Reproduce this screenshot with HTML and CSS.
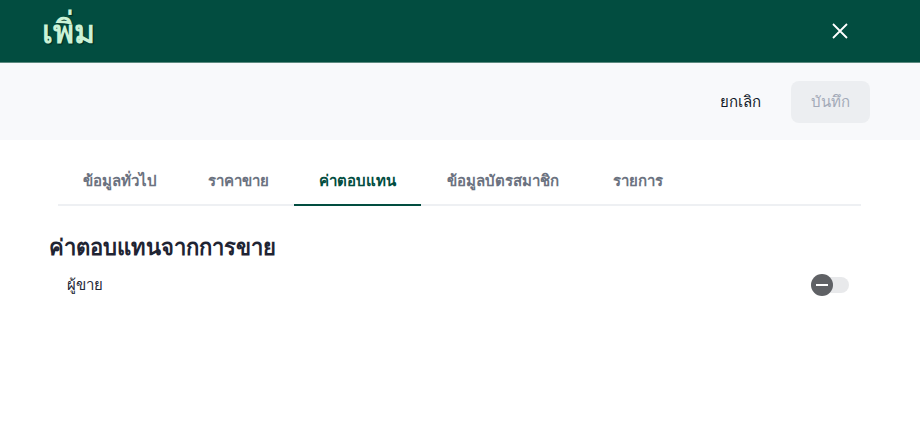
FILE: index.html
```html
<!DOCTYPE html>
<html lang="th">
<head>
<meta charset="utf-8">
<link rel="stylesheet" href="styles.css">
</head>
<body>
<div class="dialog">
  <header class="topbar">
    <h1 class="title">เพิ่ม</h1>
    <button class="close" aria-label="close">
      <svg width="16" height="16" viewBox="0 0 16 16"><path d="M1 1 L15 15 M15 1 L1 15" stroke="#fff" stroke-width="1.8" fill="none"/></svg>
    </button>
  </header>
  <div class="actions">
    <button class="btn-cancel">ยกเลิก</button>
    <button class="btn-save">บันทึก</button>
  </div>
  <div class="content">
    <nav class="tabs">
      <div class="tab">ข้อมูลทั่วไป</div>
      <div class="tab">ราคาขาย</div>
      <div class="tab active">ค่าตอบแทน</div>
      <div class="tab wide">ข้อมูลบัตรสมาชิก</div>
      <div class="tab">รายการ</div>
    </nav>
    <h2 class="section">ค่าตอบแทนจากการขาย</h2>
    <div class="row">
      <span class="label">ผู้ขาย</span>
      <span class="toggle"><span class="knob"></span></span>
    </div>
  </div>
</div>
</body>
</html>
```
FILE: styles.css
```css
* { box-sizing: border-box; }
html, body { margin: 0; padding: 0; background: #fff; }
body { font-family: "Noto Sans", "Liberation Sans", sans-serif; color: #1f2937; }
.topbar {
  height: 63px;
  background: #024d40;
  border-bottom: 1px solid #5c8a80;
  display: flex;
  align-items: center;
  justify-content: space-between;
  padding: 0 72px 0 42px;
}
.title {
  margin: 0;
  font-size: 32px;
  font-weight: 700;
  color: #c9f2d6;
  text-shadow: 1px 1px 1px rgba(0,0,0,0.5);
  line-height: 1;
}
.close {
  background: none; border: 0; padding: 0; width: 16px; height: 16px;
  display: flex;
}
.actions {
  height: 77px;
  background: #f8f9fb;
  display: flex;
  align-items: center;
  justify-content: flex-end;
  padding: 0 50px 0 0;
  gap: 30px;
}
.btn-cancel {
  background: none; border: 0; font-family: inherit;
  font-size: 15px; color: #111827; padding: 0;
}
.btn-save {
  width: 79px; height: 42px; border: 0; border-radius: 8px;
  background: #eceef1; color: #a3aab8; font-family: inherit; font-size: 15px;
}
.content { padding: 18px 59px 0 49px; }
.tabs {
  display: flex;
  margin-left: 9px;
  border-bottom: 2px solid #eef0f3;
  height: 48px;
}
.tab {
  padding: 0 25px 0 25px;
  font-size: 15px;
  font-weight: 600;
  color: #6b7280;
  display: flex; align-items: center;
  margin-bottom: -2px;
  border-bottom: 2px solid transparent;
}
.tab:first-child { padding-right: 26px; }
.tab.active { color: #024d40; border-bottom-color: #024d40; }
.tab.wide { padding-left: 26px; padding-right: 29px; }
.section {
  margin: 24px 0 0 0;
  font-size: 22px;
  font-weight: 700;
  color: #1f2433;
}
.row {
  display: flex; align-items: center; justify-content: space-between;
  padding: 8px 0 0 18px;
}
.label { font-size: 15px; color: #1f2937; }
.toggle {
  width: 37px; height: 16px; border-radius: 8px; background: #e8e9eb;
  position: relative; margin-right: 12px;
}
.knob {
  position: absolute; left: -1px; top: -3px; width: 22px; height: 22px; border-radius: 50%;
  background: #5f6165;
}
.knob::after {
  content: ""; position: absolute; left: 5px; right: 5px; top: 10px; height: 2px; background: #fff;
}
```
